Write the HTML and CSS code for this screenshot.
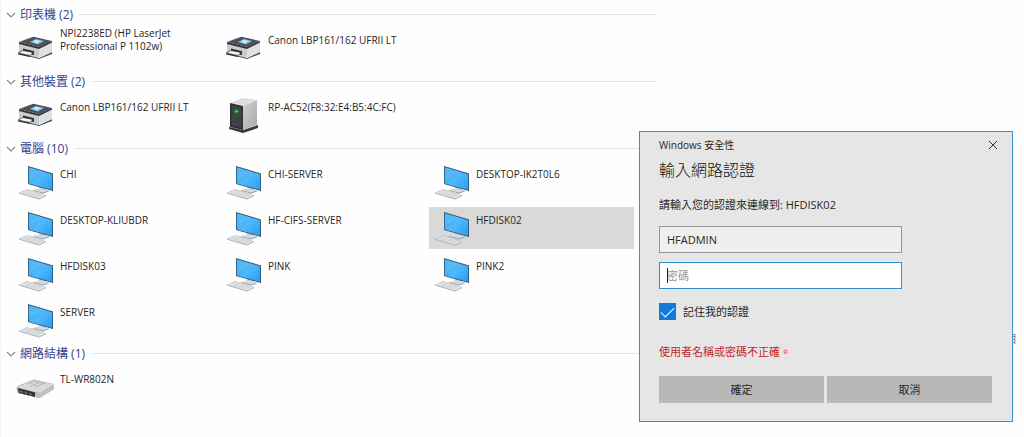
FILE: index.html
```html
<!DOCTYPE html>
<html lang="zh-Hant">
<head>
<meta charset="utf-8">
<title>網路</title>
<link rel="stylesheet" href="styles.css">
</head>
<body>
<svg class="defs" aria-hidden="true">
  <defs>
    <linearGradient id="screen" x1="0" y1="0" x2="1" y2="1">
      <stop offset="0" stop-color="#3ba6f2"/><stop offset=".5" stop-color="#4db8fb"/><stop offset="1" stop-color="#2b9cf0"/>
    </linearGradient>
    <linearGradient id="side" x1="0" y1="0" x2="1" y2="1">
      <stop offset="0" stop-color="#d2d2d4"/><stop offset="1" stop-color="#a9a9ac"/>
    </linearGradient>
    <symbol id="printer" viewBox="0 0 42 42">
      <path d="M6 25l20 6 13-6v2l-13 5-20-5z" fill="#4b4d50"/>
      <path d="M6 16l20 4v11L6 26z" fill="#c9cbce"/>
      <path d="M26 20l13-6v11l-13 6z" fill="#dfe0e2"/>
      <path d="M6 15l13.500-5q1-.4 2 0L39 14l-13 6z" fill="#4a5157"/>
      <path d="M6 15l20 5 13-6v1.500L26 22 6 17z" fill="#2f353a"/>
      <path d="M17 15l6-3 8 2-6 3.500z" fill="#8fc4e6"/>
      <path d="M20 14.500l3-1.500 4 1-3 2z" fill="#d9eefa"/>
      <path d="M10 21.500l11 2.700v3.800l-11-2.500z" fill="#24272a"/>
      <path d="M5 26l5-2.500 10 2-3 3z" fill="#f7f7f8" stroke="#33363a" stroke-width=".7"/>
      <path d="M5 26.500l12 2.500v1L5 27.500z" fill="#2b2e31"/>
    </symbol>
    <symbol id="server" viewBox="0 0 42 42">
      <path d="M8 33l14 3 15-5v3l-15 5-14-4z" fill="#37393b"/>
      <path d="M9 9l12-5 15 2-14 6z" fill="#dededf"/>
      <path d="M22 12l14-6v25l-14 5z" fill="url(#side)"/>
      <path d="M9 9l13 3v24L9 33z" fill="#303336"/>
      <path d="M10.500 11l10 2.300v20l-10-2.300z" fill="#3f4346"/>
      <circle cx="15.500" cy="17.500" r="2.200" fill="#188c22"/>
      <circle cx="15.500" cy="17.300" r="1.100" fill="#5af04e"/>
    </symbol>
    <symbol id="computer" viewBox="0 0 42 42">
      <path d="M26 25l7 2v3l-7-1z" fill="#b3bbc1"/>
      <path d="M20 29l7-2 9 2.500-6 2z" fill="#d5dade"/>
      <path d="M20 29l10 2.500 6-2v.8l-6 2.200-10-2.700z" fill="#8a949b"/>
      <path d="M15 5l25 7.500v17.500l-25-7z" fill="#344b5c"/>
      <path d="M15.700 6l23.500 7.200v15.800l-23.500-6.600z" fill="url(#screen)"/>
      <path d="M16 18.500l15-7.600-15-4.500z" fill="#7accff" opacity=".3"/>
      <path d="M6 32l8-3.500 19 6-7 3.500z" fill="#e3e6e8" stroke="#b5bbc0" stroke-width=".7"/>
      <path d="M8 32.600l16 4.400M10.500 31.400l16 4.600M13 30.200l16 4.800M12 34.200l6-3.500M17 35.600l6-3.500M22 36.800l6-3.500" stroke="#c2c7cb" stroke-width=".5"/>
      <path d="M6 32l20 6 7-3.500v.6L26 38.600 6 32.600z" fill="#a2a8ac"/>
    </symbol>
    <symbol id="router" viewBox="0 0 42 42">
      <path d="M3.500 22q0-1.500 2-2.300l14-6q1-.4 2-.2l18 4.200q1.500.5 1.500 1.800v3.500L26.500 32 4.500 27z" fill="#a7a8aa"/>
      <path d="M3.500 21.500L21 13.500l20 5-14 8.500z" fill="#d9dadb"/>
      <path d="M15 18l7-3 11 3M18 20l8-3.500M22 21l8-3.500" fill="none" stroke="#a4a6a8" stroke-width=".8"/>
      <path d="M5 22l17 4.500v4.500L6 27z" fill="#2f3133"/>
      <path d="M7 25l2 .5v1.500M11.500 26l2 .5v1.500M16 27.500l2 .5v1.500" fill="none" stroke="#9b9d9f" stroke-width=".8"/>
      <path d="M22 26.500l5 .5 14-8v4l-14.500 9-4.500-1z" fill="#bfc0c2"/>
    </symbol>
    <symbol id="chevron" viewBox="0 0 10 10">
      <path d="M1 3l4 4 4-4" fill="none" stroke="#80868c" stroke-width="1.100"/>
    </symbol>
  </defs>
</svg>

<main class="pane">
  <section class="group">
    <h2 class="group-title"><svg class="chevron"><use href="#chevron"/></svg>印表機 (2)</h2>
    <ul class="tiles">
      <li class="tile"><svg class="icon"><use href="#printer"/></svg><span class="name">NPI2238ED (HP LaserJet<br>Professional P 1102w)</span></li>
      <li class="tile"><svg class="icon"><use href="#printer"/></svg><span class="name">Canon LBP161/162 UFRII LT</span></li>
    </ul>
  </section>
  <section class="group">
    <h2 class="group-title"><svg class="chevron"><use href="#chevron"/></svg>其他裝置 (2)</h2>
    <ul class="tiles">
      <li class="tile"><svg class="icon"><use href="#printer"/></svg><span class="name">Canon LBP161/162 UFRII LT</span></li>
      <li class="tile"><svg class="icon"><use href="#server"/></svg><span class="name">RP-AC52(F8:32:E4:B5:4C:FC)</span></li>
    </ul>
  </section>
  <section class="group">
    <h2 class="group-title"><svg class="chevron"><use href="#chevron"/></svg>電腦 (10)</h2>
    <ul class="tiles">
      <li class="tile"><svg class="icon"><use href="#computer"/></svg><span class="name">CHI</span></li>
      <li class="tile"><svg class="icon"><use href="#computer"/></svg><span class="name">CHI-SERVER</span></li>
      <li class="tile"><svg class="icon"><use href="#computer"/></svg><span class="name">DESKTOP-IK2T0L6</span></li>
      <li class="tile"><svg class="icon"><use href="#computer"/></svg><span class="name">DESKTOP-KLIUBDR</span></li>
      <li class="tile"><svg class="icon"><use href="#computer"/></svg><span class="name">HF-CIFS-SERVER</span></li>
      <li class="tile selected"><svg class="icon"><use href="#computer"/></svg><span class="name">HFDISK02</span></li>
      <li class="tile"><svg class="icon"><use href="#computer"/></svg><span class="name">HFDISK03</span></li>
      <li class="tile"><svg class="icon"><use href="#computer"/></svg><span class="name">PINK</span></li>
      <li class="tile"><svg class="icon"><use href="#computer"/></svg><span class="name">PINK2</span></li>
      <li class="tile"><svg class="icon"><use href="#computer"/></svg><span class="name">SERVER</span></li>
    </ul>
  </section>
  <section class="group">
    <h2 class="group-title"><svg class="chevron"><use href="#chevron"/></svg>網路結構 (1)</h2>
    <ul class="tiles">
      <li class="tile"><svg class="icon"><use href="#router"/></svg><span class="name">TL-WR802N</span></li>
    </ul>
  </section>
</main>

<span class="behind">目</span>

<form class="dialog" role="dialog" aria-labelledby="dialog-heading">
  <header class="titlebar">
    <span>Windows 安全性</span>
    <button class="close" type="button" aria-label="關閉"><svg viewBox="0 0 10 10"><path d="M1 1l8 8M9 1l-8 8" stroke="#333" fill="none"/></svg></button>
  </header>
  <h1 class="heading" id="dialog-heading">輸入網路認證</h1>
  <p class="prompt">請輸入您的認證來連線到: HFDISK02</p>
  <input class="field" type="text" value="HFADMIN" aria-label="使用者名稱">
  <div class="password">
    <input class="field active" type="password" placeholder="密碼" aria-label="密碼">
    <span class="caret"></span>
  </div>
  <label class="remember"><input class="check" type="checkbox" checked><span>記住我的認證</span></label>
  <p class="error">使用者名稱或密碼不正確。</p>
  <div class="actions">
    <button class="button" type="submit">確定</button>
    <button class="button" type="button">取消</button>
  </div>
</form>
</body>
</html>
```

FILE: styles.css
```css
* {
  box-sizing: border-box;
}

body {
  margin: 0;
  min-height: 100vh;
  position: relative;
  overflow: hidden;
  background: #fefefe;
  color: #262626;
  font: 11px/13px "Open Sans", "Noto Sans CJK TC", sans-serif;
}

.defs {
  position: absolute;
  width: 0;
  height: 0;
}

.pane {
  width: 64.2%;
  min-height: 100vh;
  padding: 2px 0 0 5px;
  border-left: 1px solid #f3f3f3;
}

.group-title {
  display: flex;
  align-items: center;
  gap: 4px;
  height: 25px;
  margin: 0;
  color: #33438f;
  font-size: 12px;
  font-weight: 400;
}

.group-title::after {
  content: "";
  flex: 1;
  height: 1px;
  margin-left: 2px;
  background: #e4e4e6;
}

.chevron {
  width: 10px;
  height: 10px;
}

.tiles {
  display: grid;
  grid-template-columns: repeat(auto-fill, 205px);
  gap: 4px 3px;
  margin: 0;
  padding: 0 0 0 7px;
  list-style: none;
}

.tile {
  display: flex;
  gap: 5px;
  height: 42px;
}

.selected {
  background: #d9d9d9;
}

.icon {
  flex: none;
  width: 42px;
  height: 42px;
}

.name {
  display: flex;
  align-items: center;
  height: 26px;
  max-width: 150px;
  font-size: 10px;
}

.behind {
  position: absolute;
  top: 332px;
  right: 7px;
  color: #777;
}

.dialog {
  position: absolute;
  top: 131px;
  right: 11px;
  width: 374px;
  padding: 4px 20px 18px 19px;
  border: 1px solid #3a8fd0;
  background: #e6e6e6;
}

.titlebar {
  display: flex;
  justify-content: space-between;
  align-items: center;
  height: 18px;
  margin-right: -7px;
  font-size: 10px;
}

.close {
  display: flex;
  width: 12px;
  height: 18px;
  padding: 0 1px;
  border: 0;
  background: none;
  align-items: center;
}

.close svg {
  width: 10px;
  height: 10px;
}

.heading {
  margin: 4px 0 0;
  color: #111;
  font-size: 16px;
  font-weight: 300;
  line-height: 24px;
}

.prompt {
  margin: 15px 0 13px;
  line-height: 16px;
}

.field {
  display: block;
  width: 243px;
  height: 27px;
  margin: 0;
  padding: 0 7px;
  border: 1px solid #959499;
  border-radius: 0;
  outline: 0;
  background: #efefef;
  color: #262626;
  font: inherit;
}

.password {
  position: relative;
  margin: 9px 0 14px;
}

.active {
  border-color: #2e8fd3;
  background: #fff;
}

.active::placeholder {
  color: #999;
}

.caret {
  position: absolute;
  top: 6px;
  left: 8px;
  width: 1px;
  height: 15px;
  background: #222;
}

.remember {
  display: flex;
  align-items: center;
  gap: 7px;
  height: 17px;
}

.check {
  appearance: none;
  display: grid;
  place-items: center;
  width: 17px;
  height: 17px;
  margin: 0;
  background: #0f7ad8;
}

.check:checked::before {
  content: "";
  width: 12px;
  height: 6px;
  margin-bottom: 3px;
  border: solid #fff;
  border-width: 0 0 1px 1px;
  rotate: -45deg;
}

.error {
  margin: 24px 0 16px;
  color: #c3272b;
  line-height: 16px;
}

.actions {
  display: grid;
  grid-template-columns: 1fr 1fr;
  gap: 3px;
}

.button {
  height: 27px;
  padding: 0;
  border: 0;
  background: #b8b8b8;
  color: #262626;
  font: inherit;
}
```
